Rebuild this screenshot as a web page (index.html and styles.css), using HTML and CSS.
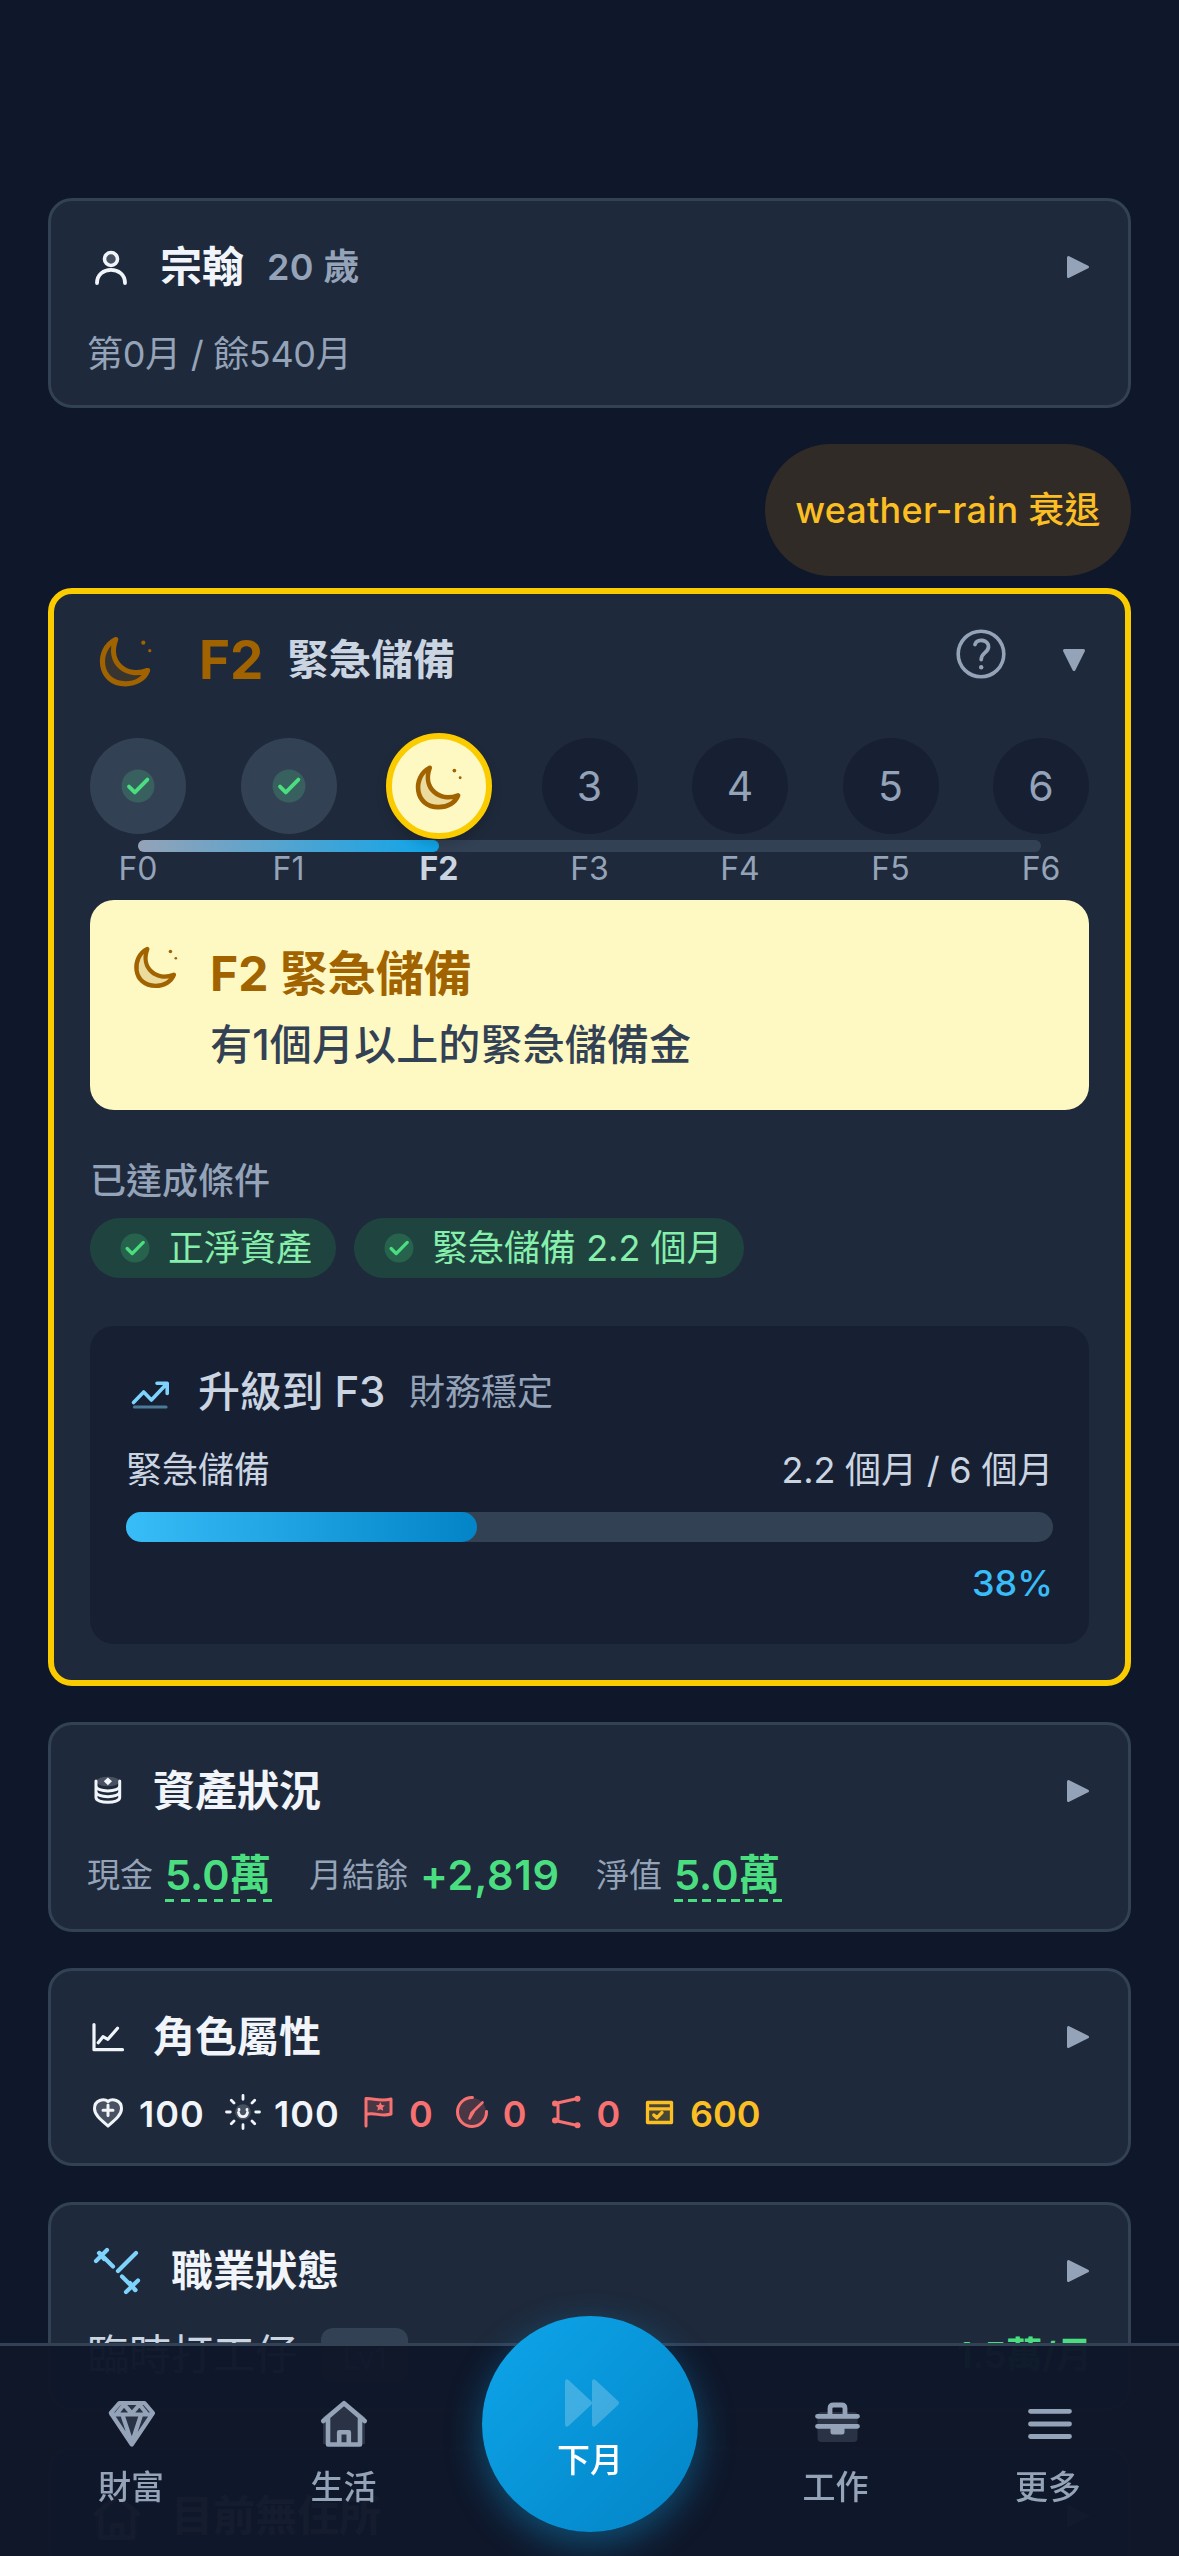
FILE: index.html
```html
<!DOCTYPE html>
<html lang="zh-Hant">
<head>
<meta charset="utf-8">
<title>下月</title>
<link rel="stylesheet" href="styles.css">
</head>
<body>
<svg class="sprite" aria-hidden="true">
  <symbol id="moon" viewBox="0 0 72 72">
    <path class="tint" d="M25.6 15.5C6 25 7.500 59.800 35.500 59.800C46 59.800 54.500 54.500 57.500 46.500C37 54.500 17 39 25.600 15.500Z"/>
    <path class="line" stroke-width="5.200" d="M25.600 15.500C6 25 7.500 59.800 35.500 59.800C46 59.800 54.500 54.500 57.500 46.500C37 54.500 17 39 25.600 15.500Z"/>
    <circle class="solid" cx="53.300" cy="18.700" r="2.100"/><circle class="solid" cx="59.800" cy="26.700" r="1.600"/>
  </symbol>
  <symbol id="check" viewBox="0 0 24 24">
    <circle class="tint" cx="12" cy="12" r="8.250"/>
    <path class="line" stroke-width="1.900" d="M7.500 12.300L10.400 15.200L16.700 8.800"/>
  </symbol>
  <symbol id="play" viewBox="0 0 24 24">
    <path class="solid joined" d="M2.500 2.500L21.500 12L2.500 21.500Z"/>
  </symbol>
  <symbol id="house" viewBox="0 0 60 60">
    <path class="tint" d="M9 24L30 8L51 24V51H9Z"/>
    <path class="line" stroke-width="4.600" d="M9.200 28L30 10.200L50.800 28M14 25V51.500H46V25M25.200 51V39.200H34.800V51"/>
  </symbol>
</svg>

<main class="page">
  <section class="card">
    <header class="card-head">
      <svg class="icon-48" viewBox="0 0 48 48"><circle class="tint" cx="24" cy="16" r="6"/><circle class="line" stroke-width="3.600" cx="24" cy="16" r="6.500"/><path class="line" stroke-width="3.800" d="M10 40C10 22.500 38 22.500 38 40"/></svg>
      <h2 class="title name">宗翰</h2><span class="age">20 歲</span>
      <svg class="arrow"><use href="#play"/></svg>
    </header>
    <p class="months">第0月 / 餘540月</p>
  </section>

  <div class="economy">weather-rain 衰退</div>

  <section class="card card-freedom">
    <header class="card-head freedom-head">
      <svg class="icon-72 amber"><use href="#moon"/></svg>
      <strong class="level">F2</strong><h2 class="level-name">緊急儲備</h2>
      <svg class="help" viewBox="0 0 60 60"><circle class="line" stroke-width="3.600" cx="30" cy="30" r="22.800"/><path class="line" stroke-width="3.800" d="M24 20.500C26 14 38 15.500 37.500 23C37 29 30.200 28.500 30.200 35.500"/><circle class="solid" cx="30.200" cy="43.300" r="2.200"/></svg>
      <svg class="arrow arrow-down"><use href="#play"/></svg>
    </header>

    <div class="stepper">
      <div class="steps">
        <div class="step step-done"><svg class="icon-48 green"><use href="#check"/></svg></div>
        <div class="step step-done"><svg class="icon-48 green"><use href="#check"/></svg></div>
        <div class="step step-active"><svg class="icon-64 amber"><use href="#moon"/></svg></div>
        <div class="step">3</div>
        <div class="step">4</div>
        <div class="step">5</div>
        <div class="step">6</div>
      </div>
      <div class="track"><div class="track-fill"></div></div>
      <div class="step-labels">
        <span>F0</span><span>F1</span><span class="current">F2</span><span>F3</span><span>F4</span><span>F5</span><span>F6</span>
      </div>
    </div>

    <div class="banner">
      <svg class="icon-60 amber"><use href="#moon"/></svg>
      <div class="banner-text">
        <h3>F2 緊急儲備</h3>
        <p>有1個月以上的緊急儲備金</p>
      </div>
    </div>

    <p class="met-label">已達成條件</p>
    <div class="chips">
      <span class="chip chip-a"><svg class="icon-42 green"><use href="#check"/></svg>正淨資產</span>
      <span class="chip chip-b"><svg class="icon-42 green"><use href="#check"/></svg>緊急儲備 2.2 個月</span>
    </div>

    <div class="upgrade">
      <div class="upgrade-head">
        <svg class="icon-48 sky" viewBox="0 0 48 48"><path class="line" stroke-width="3.600" d="M7.500 34.500L17.700 24L25.400 32L40.500 16M31 15.300H41.200V25.500"/><path class="line faint" stroke-width="3.200" d="M8.500 39H40"/></svg>
        <h3>升級到 F3</h3><span>財務穩定</span>
      </div>
      <div class="upgrade-row"><span>緊急儲備</span><span class="amount">2.2 個月 / 6 個月</span></div>
      <div class="bar"><div class="bar-fill" style="width:37.9%"></div></div>
      <p class="percent">38%</p>
    </div>
  </section>

  <section class="card">
    <header class="card-head">
      <svg class="icon-42" viewBox="0 0 42 42"><ellipse class="tint" cx="20.900" cy="11.500" rx="11.500" ry="4.800"/><path class="solid" d="M20.900 7.500L25 11.300L20.900 15.200L16.800 11.300Z"/><path class="line" stroke-width="3" d="M9 11V27.500C9 33.800 32.700 33.800 32.700 27.500V11M9 16C9 22.500 32.700 22.500 32.700 16M9 21.800C9 28.300 32.700 28.300 32.700 21.800"/></svg>
      <h2 class="title">資產狀況</h2>
      <svg class="arrow"><use href="#play"/></svg>
    </header>
    <div class="assets">
      <span class="asset-label">現金</span><b class="money money-cash">5.0萬</b>
      <span class="asset-label">月結餘</span><b class="money money-flow">+2,819</b>
      <span class="asset-label">淨值</span><b class="money money-net">5.0萬</b>
    </div>
  </section>

  <section class="card">
    <header class="card-head">
      <svg class="icon-42" viewBox="0 0 42 42"><path class="line" stroke-width="3.200" d="M7 8.500V33.700H35.500M11.200 26.700L16 20.700L20.900 23.300L30.500 12.300"/></svg>
      <h2 class="title">角色屬性</h2>
      <svg class="arrow"><use href="#play"/></svg>
    </header>
    <div class="stats">
      <div class="stat stat-wide"><svg class="icon-42" viewBox="0 0 42 42"><path class="tint" d="M21 35C14 29 7.500 24 7.500 17.500C7.500 9 17 7 21 10.500C25 7 34.500 9 34.500 17.500C34.500 24 28 29 21 35Z"/><path class="line" stroke-width="3" d="M21 35C14 29 7.500 24 7.500 17.500C7.500 9 17 7 21 10.500C25 7 34.500 9 34.500 17.500C34.500 24 28 29 21 35ZM21 14V24.500M16 19.300H26"/></svg><span>100</span></div>
      <div class="stat stat-wide"><svg class="icon-42" viewBox="0 0 42 42"><circle class="tint" cx="21" cy="21" r="7.800"/><path class="line" stroke-width="2.800" d="M21 4.500V8.300M21 33.700V37.500M4.500 21H8.300M33.700 21H37.500M9.300 9.300L12 12M30 30L32.700 32.700M9.300 32.700L12 30M30 12L32.700 9.300M16.500 21.500C17.500 27 24.500 27 25.500 21.500M17 18.500V19M25 18.500V19"/></svg><span>100</span></div>
      <div class="stat red"><svg class="icon-42" viewBox="0 0 42 42"><path class="tint" d="M9 8C14 4.500 21 10.500 34 8V23C22 26.500 16 20 9 23Z"/><path class="line" stroke-width="3" d="M9 35V7.500C16 7 23 11 34 8V23C25 26 17 21 9 23.500"/><path class="solid" d="M23.300 11L24.700 14L27.900 14.400L25.600 16.600L26.200 19.800L23.300 18.200L20.400 19.800L21 16.600L18.700 14.400L21.900 14Z"/></svg><span>0</span></div>
      <div class="stat red"><svg class="icon-42" viewBox="0 0 42 42"><circle class="tint" cx="21" cy="21" r="14"/><path class="line" stroke-width="3" d="M21.500 6.500A14.500 14.500 0 1 0 35.500 20.500"/><path class="line" stroke-width="2.600" d="M31.500 11.500L20.500 22L18.500 27.500L23 20"/></svg><span>0</span></div>
      <div class="stat red"><svg class="icon-42" viewBox="0 0 42 42"><path class="line" stroke-width="3" d="M11 12.500L33.500 7.500M14 13V29M11 29.500L33.500 34.500"/><circle class="solid" cx="11" cy="12.500" r="3"/><circle class="solid" cx="33.500" cy="7.800" r="3"/><circle class="solid" cx="11" cy="29.500" r="3"/><circle class="solid" cx="33.500" cy="34.300" r="3"/></svg><span>0</span></div>
      <div class="stat gold"><svg class="icon-42" viewBox="0 0 42 42"><path class="tint" d="M9 11H34V32H9Z"/><path class="line" stroke-width="3.300" d="M9.500 11.500H33.500V31.500H9.500ZM9.500 17.800H33.500M15.800 24L18.800 26.800L24 21.500"/></svg><span>600</span></div>
    </div>
  </section>

  <section class="card">
    <header class="card-head">
      <svg class="icon-60 sky" viewBox="0 0 60 60"><path class="line" stroke-width="4.200" d="M9 20L20 9M12.500 12L26 25.500M49 12L31 30M35 35.500L48.500 49M39 51L51 39.500M12 12L17 18M43 42L48 49"/></svg>
      <h2 class="title">職業狀態</h2>
      <svg class="arrow"><use href="#play"/></svg>
    </header>
    <div class="job">
      <span class="job-name">臨時打工仔</span><span class="job-level">Lv1</span><span class="salary">1.5萬/月</span>
    </div>
  </section>

  <section class="card">
    <header class="card-head">
      <svg class="icon-60"><use href="#house"/></svg>
      <h2 class="title">目前無住所</h2>
      <svg class="arrow"><use href="#play"/></svg>
    </header>
  </section>
</main>

<nav class="tabs">
  <a class="tab"><svg class="icon-60" viewBox="0 0 60 60"><path class="tint" d="M18 10H44L52 20L31 52L9.500 20Z"/><path class="line" stroke-width="4.200" d="M18.500 10H43.500L52 20L30.800 51.500L9.800 20ZM10.500 21.500H51M15.500 21L23 11.500L30.800 20.500L38.500 11.500L46 21M21.500 22L30.800 50L40 22"/></svg>財富</a>
  <a class="tab"><svg class="icon-60"><use href="#house"/></svg>生活</a>
  <span></span>
  <a class="tab"><svg class="icon-60" viewBox="0 0 60 60"><rect class="tint" x="11.500" y="19" width="40" height="30" rx="4"/><path class="line" stroke-width="4.800" d="M11.500 23.300H51.500M11.500 33.300H51.500M24 21V15.500Q24 12 27.500 12H35.500Q39 12 39 15.500V21"/><rect class="solid" x="24.500" y="33" width="14" height="8.500" rx="2.500"/></svg>工作</a>
  <a class="tab"><svg class="icon-60" viewBox="0 0 60 60"><path class="line" stroke-width="4.800" d="M12.500 18.300H51.500M12.500 31H51.500M12.500 43.500H51.500"/></svg>更多</a>
  <button class="next"><svg class="forward" viewBox="0 0 54 48"><path class="solid" d="M0 3Q0-1.500 4 1.500L26 22Q28 24 26 26L4 46.500Q0 49.500 0 45ZM27 3Q27-1.500 31 1.500L53 22Q55 24 53 26L31 46.500Q27 49.500 27 45Z"/></svg>下月</button>
</nav>
</body>
</html>
```
FILE: styles.css
```css
* { box-sizing: border-box; margin: 0; padding: 0; }

body {
  width: 1179px;
  height: 2556px;
  overflow: hidden;
  background: #0f172a;
  color: #f1f5f9;
  font-family: Inter, "Noto Sans CJK TC", sans-serif;
  font-size: 36px;
}

.sprite { position: absolute; width: 0; height: 0; }
svg { display: block; flex: none; }
.line { fill: none; stroke: currentColor; stroke-linecap: round; stroke-linejoin: round; }
.solid { fill: currentColor; }
.joined { stroke: currentColor; stroke-width: 3px; stroke-linejoin: round; }
.tint { fill: currentColor; opacity: .2; }
.faint { opacity: .5; }

.icon-42 { width: 42px; height: 42px; }
.icon-48 { width: 48px; height: 48px; }
.icon-60 { width: 60px; height: 60px; }
.icon-64 { width: 64px; height: 64px; }
.icon-72 { width: 72px; height: 72px; }

.amber { color: #a16200; }
.green { color: #4ade80; }
.sky { color: #7dd3fc; }
.red { color: #f87171; }
.gold { color: #fbbf24; }

.page { display: flex; flex-direction: column; gap: 36px; padding: 198px 48px 0; }

.card {
  flex: none;
  border: 3px solid #334155;
  border-radius: 24px;
  background: #1e293b;
  padding: 36px;
  padding-bottom: 24px;
}

.card-head { display: flex; align-items: center; gap: 24px; height: 60px; }
.title { font-size: 42px; font-weight: 600; line-height: 62px; white-space: nowrap; }
.name { padding-left: 1px; margin-right: -1px; line-height: 60px; }
.age { font-weight: 600; line-height: 60px; color: #94a3b8; letter-spacing: .4px; }
.arrow { width: 24px; height: 24px; margin-left: auto; margin-right: 2px; margin-top: -1px; color: #94a3b8; }
.months { margin: 36px 0 6px; line-height: 42px; color: #94a3b8; letter-spacing: -.3px; }

.economy {
  align-self: flex-end;
  width: 366px;
  height: 132px;
  margin-bottom: -24px;
  border-radius: 66px;
  background: #302b26;
  color: #fbbf24;
  font-weight: 500;
  line-height: 132px;
  text-align: center;
  white-space: nowrap;
  letter-spacing: .25px;
}

.card-freedom { border: 6px solid #facc00; padding: 36px; }
.freedom-head { gap: 0; }
.level { margin-left: 37px; width: 88px; font-size: 53px; font-weight: 700; color: #a16200; }
.level-name { font-size: 42px; font-weight: 600; line-height: 60px; color: #cbd5e1; }
.help { width: 60px; height: 60px; margin-left: auto; margin-top: -12px; color: #94a3b8; }
.arrow-down { margin: -1px 3px 0 51px; transform: rotate(90deg); }

.stepper { margin-top: 48px; }
.steps { display: flex; justify-content: space-between; }
.step {
  display: flex;
  align-items: center;
  justify-content: center;
  width: 96px;
  height: 96px;
  border-radius: 50%;
  background: #172033;
  color: #94a3b8;
  font-size: 41px;
}
.step-done { background: #334155; }
.step-active {
  width: 106px;
  height: 106px;
  margin: -5px;
  border: 6px solid #facc00;
  background: #fef9c3;
  box-shadow: 0 6px 12px rgba(0, 0, 0, .15);
}
.track { height: 12px; margin: 6px 48px 0; border-radius: 6px; background: #334155; }
.track-fill { width: 33.33%; height: 12px; border-radius: 6px; background: linear-gradient(90deg, #94a3b8, #0ea5e9); }
.step-labels { display: flex; justify-content: space-between; height: 30px; line-height: 33px; font-size: 32px; color: #94a3b8; }
.step-labels span { width: 96px; text-align: center; }
.step-labels .current { font-weight: 700; color: #cbd5e1; }

.banner { display: flex; gap: 24px; height: 210px; margin-top: 18px; padding: 36px; border-radius: 24px; background: #fef9c3; }
.banner-text { margin-top: 4px; }
.banner h3 { font-size: 48px; font-weight: 700; line-height: 67px; color: #a16200; }
.banner p { margin-top: 8px; font-size: 42px; font-weight: 500; line-height: 60px; color: #334155; letter-spacing: .15px; }

.met-label { margin-top: 47px; line-height: 48px; font-weight: 500; color: #94a3b8; }
.chips { display: flex; gap: 18px; margin-top: 13px; }
.chip {
  display: flex;
  align-items: center;
  gap: 12px;
  height: 60px;
  padding-left: 24px;
  border-radius: 30px;
  background: #1f4440;
  color: #86efac;
  line-height: 60px;
  white-space: nowrap;
}
.chip-a { width: 246px; }
.chip-b { width: 390px; }

.upgrade { height: 318px; margin-top: 48px; padding: 36px; border-radius: 24px; background: #172033; }
.upgrade-head { display: flex; align-items: center; gap: 24px; height: 60px; line-height: 60px; color: #94a3b8; }
.upgrade-head svg { margin-top: -1px; }
.upgrade-head h3 { font-size: 42px; font-weight: 500; color: #cbd5e1; letter-spacing: -.2px; }
.upgrade-row { display: flex; justify-content: space-between; margin-top: 24px; line-height: 48px; color: #cbd5e1; }
.amount { letter-spacing: -.2px; }
.bar { height: 30px; margin-top: 18px; border-radius: 15px; background: #334155; }
.bar-fill { height: 30px; border-radius: 15px; background: linear-gradient(90deg, #38bdf8, #0284c7); }
.percent { margin-top: 17px; line-height: 48px; text-align: right; color: #38bdf8; font-weight: 500; }

.assets { display: flex; margin: 27px 0 3px; height: 54px; line-height: 54px; white-space: nowrap; }
.asset-label { margin-right: 12px; font-size: 33px; color: #94a3b8; }
.money { font-size: 41.500px; font-weight: 600; color: #4ade80; margin-right: 36px; }
.money-cash, .money-net { width: 108px; background: repeating-linear-gradient(90deg, #4ade80 0 9px, transparent 9px 16.4px) 0 100% / 100% 3px no-repeat; }
.money-flow { width: 140px; letter-spacing: .7px; }
.money-net { width: 109px; background-image: repeating-linear-gradient(90deg, #4ade80 0 9px, transparent 9px 14.2px); }

.stats { display: flex; height: 42px; margin: 24px 0 6px; }
.stat { display: flex; align-items: center; gap: 10px; width: 93.700px; font-weight: 600; }
.stat-wide { width: 135px; }
.stat svg { margin-top: -1px; }
.stat span { padding-top: 3px; line-height: 42px; }
.stat-wide span { letter-spacing: 1px; }

.job { display: flex; align-items: center; height: 60px; margin-top: 24px; margin-bottom: -1px; line-height: 60px; }
.job-name { font-size: 42px; color: #cbd5e1; white-space: nowrap; }
.job-level { width: 87px; height: 54px; margin-left: 24px; border-radius: 12px; background: #334155; color: #94a3b8; font-size: 30px; line-height: 60px; text-align: center; }
.salary { margin-left: auto; color: #4ade80; font-weight: 600; }

.tabs {
  position: fixed;
  left: 0;
  bottom: 0;
  display: grid;
  grid-template-columns: 212.500px 212.500px 279.500px 212.500px 212.500px;
  justify-content: center;
  width: 1179px;
  height: 213px;
  padding-top: 47px;
  border-top: 3px solid #334155;
  background: rgba(15, 23, 42, .98);
}
.tab { display: flex; flex-direction: column; align-items: center; gap: 11px; color: #94a3b8; font-size: 33px; font-weight: 500; line-height: 46px; }

.next {
  position: absolute;
  left: 482px;
  top: -30px;
  display: flex;
  flex-direction: column;
  align-items: center;
  width: 216px;
  height: 216px;
  padding-top: 63px;
  border: 0;
  border-radius: 50%;
  background: linear-gradient(135deg, #0ea5e9, #0284c7);
  box-shadow: 0 12px 36px rgba(14, 165, 233, .4);
  color: #fff;
  font: 500 33px/46px Inter, "Noto Sans CJK TC", sans-serif;
}
.forward { width: 54px; height: 48px; margin-bottom: 10px; margin-left: 3px; opacity: .22; }
```
